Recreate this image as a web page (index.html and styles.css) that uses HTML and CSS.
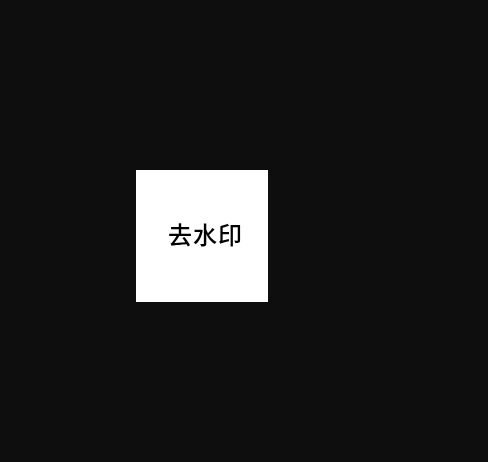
FILE: index.html
```html
<!DOCTYPE html>
<html lang="zh">
<head>
<meta charset="utf-8">
<title>去水印</title>
<link rel="stylesheet" href="styles.css">
</head>
<body>
<main class="viewer">
  <figure class="picture">
    <span class="picture-text">去水印</span>
  </figure>
</main>
</body>
</html>
```
FILE: styles.css
```css
html, body {
  margin: 0;
  height: 100%;
  background: #0e0e0e;
}
.viewer {
  box-sizing: border-box;
  height: 100%;
  padding: 170px 0 0 136px;
}
.picture {
  margin: 0;
  width: 132px;
  height: 132px;
  background: #fff;
  display: flex;
  align-items: center;
  justify-content: center;
  padding-left: 7px;
  padding-bottom: 4px;
  box-sizing: border-box;
}
.picture-text {
  font-family: "Noto Sans CJK SC", sans-serif;
  font-size: 24px;
  font-weight: 500;
  line-height: 1;
  letter-spacing: 1px;
  color: #000;
  filter: blur(0.35px);
}
```
